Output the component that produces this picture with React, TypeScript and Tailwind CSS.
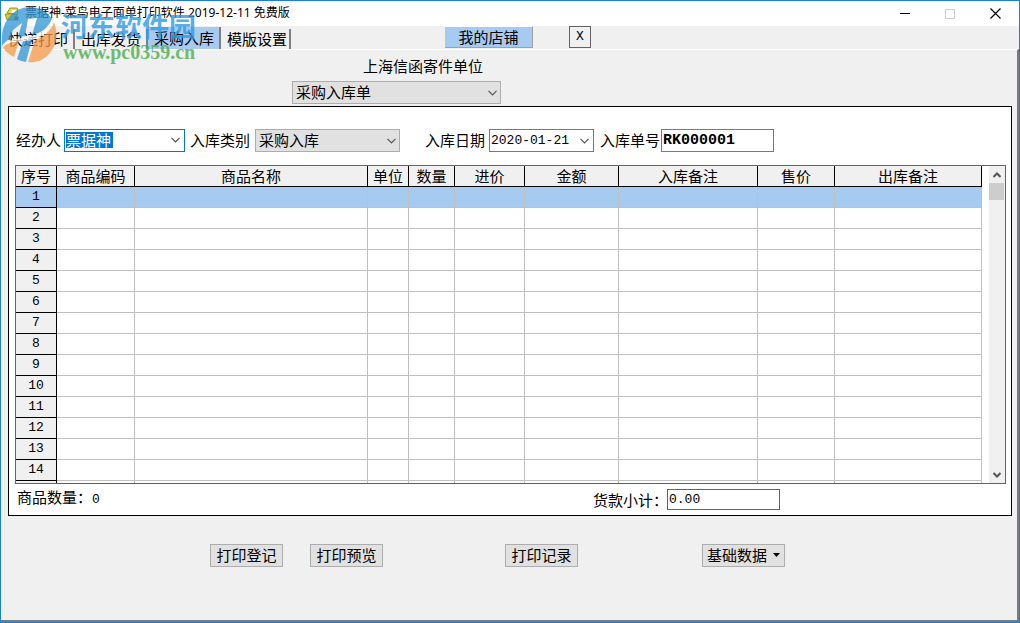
import { useState } from 'react'
import type { ReactNode } from 'react'

const tabs = ['快递打印', '出库发货', '采购入库', '模版设置']

const columns = [
  { title: '商品编码', width: 78 },
  { title: '商品名称', width: 233 },
  { title: '单位', width: 41 },
  { title: '数量', width: 46 },
  { title: '进价', width: 70 },
  { title: '金额', width: 94 },
  { title: '入库备注', width: 139 },
  { title: '售价', width: 77 },
  { title: '出库备注', width: 147 },
]

const rows = Array.from({ length: 14 }, (_, i) => i + 1)

function Chevron({ className = '' }: { className?: string }) {
  return (
    <svg viewBox="0 0 9 6" className={`w-[9px] h-[6px] ${className}`} fill="none" stroke="#555" strokeWidth="1.2">
      <path d="M0.5 0.8 L4.5 4.8 L8.5 0.8" />
    </svg>
  )
}

function ScrollArrow({ up = false }: { up?: boolean }) {
  return (
    <svg viewBox="0 0 8 6" className="w-2 h-1.5" fill="none" stroke="#555" strokeWidth="2">
      <path d={up ? 'M0.5 5 L4 1.5 L7.5 5' : 'M0.5 1 L4 4.5 L7.5 1'} />
    </svg>
  )
}

function PushButton({ children, className = '' }: { children: ReactNode; className?: string }) {
  return (
    <button
      type="button"
      className={`h-[23px] pb-0.5 flex items-center justify-center bg-[#e1e1e1] border border-[#adadad] whitespace-nowrap ${className}`}
    >
      {children}
    </button>
  )
}

function DropDown({ id, options, className }: { id: string; options: string[]; className: string }) {
  return (
    <div className={`relative ${className}`}>
      <select
        id={id}
        className="block w-full h-[23px] pl-[3px] pr-5 pb-0.5 appearance-none bg-[#e1e1e1] border border-[#adadad] leading-[19px] outline-none"
      >
        {options.map(o => (
          <option key={o}>{o}</option>
        ))}
      </select>
      <Chevron className="absolute right-1 top-[9px] pointer-events-none" />
    </div>
  )
}

function AppIcon() {
  return (
    <svg viewBox="0 0 16 16" className="w-4 h-4">
      <path d="M3 7 L6 2 L13 2 L14 5 L13 9 Z" fill="#e8dc3a" stroke="#7d7a1a" strokeWidth="0.8" />
      <path d="M1 8 L12 8 L14 14 L3 14 Z" fill="#d9cf2a" stroke="#8a8420" strokeWidth="0.8" />
      <path d="M8 4 L12 4 L11 7 L7 7 Z" fill="#fff" />
      <path d="M11 10 L15 11 L14 14 L10 14 Z" fill="#3f7d43" />
    </svg>
  )
}

function TitleBar() {
  return (
    <header className="h-[25px] flex items-center bg-white pl-[3px] pr-[18px]">
      <AppIcon />
      <h1 className="ml-[5px] pb-0.5 text-[12px] leading-4 whitespace-nowrap font-['Noto_Sans','Noto_Sans_CJK_SC',sans-serif]">
        票据神-菜鸟电子面单打印软件 2019-12-11 免费版
      </h1>
      <div className="ml-auto flex items-center gap-[35px]">
        <button type="button" aria-label="最小化">
          <svg viewBox="0 0 10 11" className="block w-[10px] h-[11px]">
            <path d="M0 5.5 H10" stroke="#000" />
          </svg>
        </button>
        <button type="button" aria-label="最大化" disabled>
          <svg viewBox="0 0 10 10" className="block w-[10px] h-[10px]">
            <rect x="0.5" y="0.5" width="9" height="9" fill="none" stroke="#ccc" />
          </svg>
        </button>
        <button type="button" aria-label="关闭">
          <svg viewBox="0 0 11 11" className="block w-[11px] h-[11px]">
            <path d="M0.5 0.5 L10.5 10.5 M10.5 0.5 L0.5 10.5" stroke="#000" strokeWidth="1.2" />
          </svg>
        </button>
      </div>
    </header>
  )
}

function Watermark() {
  return (
    <div className="absolute left-0 top-0 flex items-start pointer-events-none">
      <svg viewBox="0 0 60 66" className="w-[60px] h-[66px] opacity-75">
        {/* blue upper body */}
        <path d="M1 40 C0 20 13 6 29 6 C39 6 47 11 51 18 C47 27 40 32 31 34 L36 17 L27 18 L24 35 L17 36 L21 22 L12 29 L9 38 C6 39 3 42 1 45 Z" fill="#2f95d6" />
        {/* blue stem under the swoosh */}
        <path d="M22 40 L31 38 L25 61 C22 60 19 60 16 58 Z" fill="#2f95d6" />
        {/* orange lower right */}
        <path d="M53 21 C58 34 55 47 46 55 C41 60 33 62 27 61 L34 39 C43 36 50 30 53 21 Z" fill="#f79a48" />
        {/* orange lower left */}
        <path d="M2 46 C6 42 11 41 18 40 L13 56 C7 53 4 50 2 46 Z" fill="#f79a48" />
        {/* swoosh */}
        <path d="M2 46 C9 36 21 38 31 35 C42 32 48 26 52 18 C49 30 41 37 31 39 C20 41 9 39 2 46 Z" fill="#fff" />
      </svg>
      <div className="pt-[9px] whitespace-nowrap">
        <p className="text-[27px] leading-8 font-bold text-[#2f9be0] opacity-80">河东软件园</p>
        <p className="pl-0.5 font-['Liberation_Serif',serif] text-[20px] leading-5 font-bold text-[#4caf50] opacity-80">www.pc0359.cn</p>
      </div>
    </div>
  )
}

export default function App() {
  const [activeTab, setActiveTab] = useState('采购入库')
  const [activeRow, setActiveRow] = useState(1)

  return (
    <div className="relative min-h-screen flex flex-col bg-[#f0f0f0] border border-[#1a80d4] text-[15px] leading-5 text-black font-['Noto_Sans_CJK_SC',sans-serif]">
      <TitleBar />

      {/* Tabs and shop buttons */}
      <nav className="h-[23px] flex items-end pl-px">
        <div className="flex items-end">
          {tabs.map(tab => (
            <button
              key={tab}
              type="button"
              onClick={() => setActiveTab(tab)}
              className={`w-[73px] last:w-[70px] pl-1.5 text-left border-r-2 border-[#808080] whitespace-nowrap ${
                tab === activeTab ? 'h-[22px] bg-[#a6caf0]' : 'h-5'
              }`}
            >
              {tab}
            </button>
          ))}
        </div>
        <button
          type="button"
          className="self-start ml-[154px] w-[88px] h-[22px] pb-0.5 bg-[#a6caf0] border-r border-b border-[#a0a0a0] border-t border-t-white"
        >
          我的店铺
        </button>
        <button
          type="button"
          className="self-start ml-9 w-[22px] h-[22px] flex items-center justify-center border border-[#646464] font-['Liberation_Mono',monospace] text-[13px]"
        >
          X
        </button>
      </nav>

      <main className="flex-1 border-t border-t-white border-r-2 border-r-[#7a7a7a] border-b-2 border-b-[#7a7a7a] pl-[7px] pr-[5px]">
        <div className="ml-[284px] pt-1.5 w-[209px] pb-[2px]">
          <label htmlFor="form-type" className="block pl-[71px] whitespace-nowrap">上海信函寄件单位</label>
          <DropDown id="form-type" options={['采购入库单', '采购退货单']} className="mt-[5px] w-full" />
        </div>

        <section className="bg-white border border-black pl-1.5 pr-[5px]">
          <div className="flex items-center pt-[22px] pb-[13px] whitespace-nowrap [&>label]:pb-0.5">
            <label htmlFor="operator" className="w-[49px] pl-px">经办人</label>
            <div className="w-[121px] h-[23px] flex items-center justify-between border border-[#0078d7] pl-px pb-px pr-1">
              <input id="operator" defaultValue="票据神" className="w-[47px] h-4 bg-[#0078d7] text-white leading-4 outline-none" />
              <button type="button" aria-label="选择经办人">
                <Chevron />
              </button>
            </div>

            <label htmlFor="category" className="ml-[5px] w-[65px]">入库类别</label>
            <DropDown id="category" options={['采购入库', '其他入库']} className="w-[145px]" />

            <label htmlFor="date" className="ml-[25px] w-16">入库日期</label>
            <div className="w-[105px] h-[23px] flex items-center justify-between border border-[#7a7a7a] pl-px pr-1">
              <input
                id="date"
                defaultValue="2020-01-21"
                className="w-20 font-['Liberation_Mono',monospace] text-[13px] outline-none"
              />
              <button type="button" aria-label="选择日期">
                <Chevron />
              </button>
            </div>

            <label htmlFor="order-no" className="ml-1.5 w-[61px]">入库单号</label>
            <input
              id="order-no"
              defaultValue="RK000001"
              className="w-[113px] h-[23px] border border-[#7a7a7a] pl-px font-['Liberation_Mono',monospace] text-[15px] font-bold outline-none"
            />
          </div>

          <div className="flex h-[319px] border border-[#646464] overflow-hidden">
            <div className="flex-1">
              <table className="w-full table-fixed border-separate border-spacing-0 text-center">
                <colgroup>
                  <col style={{ width: 41 }} />
                  {columns.map(c => (
                    <col key={c.title} style={{ width: c.width }} />
                  ))}
                </colgroup>
                <thead>
                  <tr className="h-[21px] bg-[#f0f0f0]">
                    <th className="p-0 border-r border-b border-black font-normal">序号</th>
                    {columns.map(c => (
                      <th key={c.title} className="p-0 border-r border-b border-black font-normal">{c.title}</th>
                    ))}
                  </tr>
                </thead>
                <tbody>
                  {rows.map(n => (
                    <tr
                      key={n}
                      onClick={() => setActiveRow(n)}
                      className={`h-[21px] ${n === activeRow ? 'bg-[#a6caf0]' : 'bg-white'}`}
                    >
                      <th
                        className={`p-0 border-r border-b border-black font-normal font-['Liberation_Mono',monospace] text-[13px] ${
                          n === activeRow ? '' : 'bg-[#f0f0f0]'
                        }`}
                      >
                        {n}
                      </th>
                      {columns.map(c => (
                        <td key={c.title} className="p-0 border-r border-b border-[#c0c0c0]" />
                      ))}
                    </tr>
                  ))}
                  {/* blank row peeking out at the bottom of the grid */}
                  <tr className="h-[21px]">
                    <th className="p-0 border-r border-black bg-[#f0f0f0]" />
                    {columns.map(c => (
                      <td key={c.title} className="p-0 border-r border-[#c0c0c0]" />
                    ))}
                  </tr>
                </tbody>
              </table>
            </div>
            <div className="ml-[7px] w-4 flex flex-col items-center bg-[#f0f0f0]">
              <button type="button" aria-label="向上滚动" className="w-full h-[17px] flex items-center justify-center">
                <ScrollArrow up />
              </button>
              <div className="w-full h-[17px] bg-[#cdcdcd] border-r border-[#f0f0f0]" />
              <button type="button" aria-label="向下滚动" className="mt-auto w-full h-[17px] flex items-center justify-center">
                <ScrollArrow />
              </button>
            </div>
          </div>

          <div className="flex items-center h-[31px] whitespace-nowrap">
            <p className="w-[578px] pl-0.5 pb-0.5">
              商品数量：<span className="font-['Liberation_Mono',monospace] text-[13px]">0</span>
            </p>
            <label htmlFor="subtotal" className="w-[74px]">货款小计：</label>
            <input
              id="subtotal"
              defaultValue="0.00"
              className="w-[113px] h-[21px] border border-[#646464] pl-px font-['Liberation_Mono',monospace] text-[13px] outline-none"
            />
          </div>
        </section>

        <div className="flex pt-7 pl-[202px]">
          <PushButton className="w-[73px]">打印登记</PushButton>
          <PushButton className="ml-[27px] w-[73px]">打印预览</PushButton>
          <PushButton className="ml-[122px] w-[73px]">打印记录</PushButton>
          <PushButton className="ml-[124px] w-[83px] gap-1.5">
            基础数据
            <svg viewBox="0 0 7 4" className="w-[7px] h-1">
              <path d="M0 0 H7 L3.5 4 Z" />
            </svg>
          </PushButton>
        </div>
      </main>

      <Watermark />
    </div>
  )
}
